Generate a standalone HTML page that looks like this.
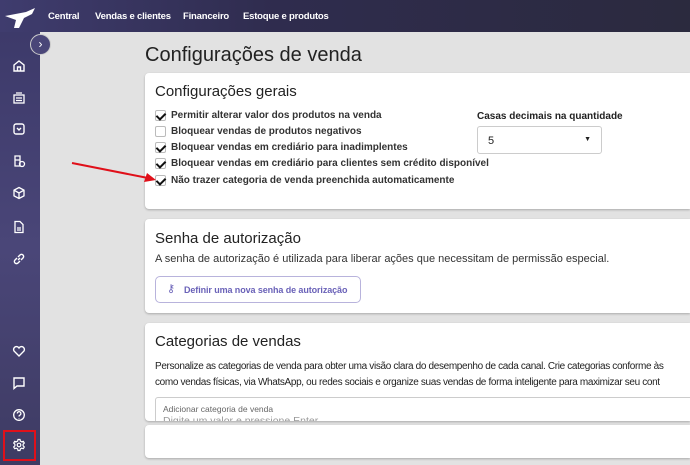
<!DOCTYPE html>
<html><head><meta charset="utf-8"><style>
*{box-sizing:border-box;margin:0;padding:0}
html,body{width:690px;height:465px;overflow:hidden}
body{background:#e2e2e2;font-family:"Liberation Sans",Arial,sans-serif;position:relative}
.top{position:absolute;left:0;top:0;width:690px;height:32px;background:linear-gradient(90deg,#3f3c6e,#2f2c4e 40%,#2b2a3e);}
.top span{position:absolute;top:11px;color:#fff;font-size:9.5px;font-weight:bold;letter-spacing:-0.2px;white-space:nowrap}
.side{position:absolute;left:0;top:32px;width:40px;height:433px;background:linear-gradient(180deg,#3d3a6a,#4a4678 50%,#3e3b63);}
.ico{position:absolute;left:12px;width:14px;height:14px}
.card{position:absolute;left:145px;width:545px;background:#fff;border-radius:4px 0 0 4px;box-shadow:0 1px 2px rgba(0,0,0,.25);overflow:hidden}
.cb{position:absolute;left:10px;font-size:10px;color:#222}
.cb i{position:absolute;left:0;top:0;width:11px;height:11px;border:1px solid #bbb;border-radius:2px;background:#fff}
.cb i.c::after{content:"";position:absolute;left:2px;top:0px;width:4px;height:7px;border:solid #111;border-width:0 2px 2px 0;transform:rotate(45deg)}
.cb b{position:absolute;left:16px;top:0;white-space:nowrap;font-weight:bold;color:#333}
h2{position:absolute;left:10px;font-weight:normal;font-size:15px;color:#222}
</style></head><body>
<div class="top">
<svg style="position:absolute;left:4px;top:8px" width="32" height="22" viewBox="0 0 32 22"><path d="M1 8 L22 4 L31 0 L28 6 L20 10 L15 20 L10 20 L12 12 Z" fill="#fff"/></svg>
<span style="left:48px">Central</span><span style="left:95px">Vendas e clientes</span><span style="left:183px">Financeiro</span><span style="left:243px">Estoque e produtos</span>
</div>
<div class="side">
<svg class="ico" style="top:27px" viewBox="0 0 14 14" fill="none" stroke="#fff" stroke-width="1.4"><path d="M2 6 L7 2 L12 6 V12 H2 Z M5.5 12 V8 H8.5 V12"/></svg>
<svg class="ico" style="top:59px" viewBox="0 0 14 14" fill="none" stroke="#fff" stroke-width="1.3"><rect x="2" y="4" width="10" height="8"/><path d="M4 2h6M4 7h6M4 9.5h6"/></svg>
<svg class="ico" style="top:90px" viewBox="0 0 14 14" fill="none" stroke="#fff" stroke-width="1.4"><rect x="2" y="2" width="10" height="10" rx="2"/><path d="M5 6l2 2 2-2"/></svg>
<svg class="ico" style="top:122px" viewBox="0 0 14 14" fill="none" stroke="#fff" stroke-width="1.3"><path d="M3 2h5v10H3zM3 6h5"/><circle cx="10" cy="10" r="2.5"/></svg>
<svg class="ico" style="top:154px" viewBox="0 0 14 14" fill="none" stroke="#fff" stroke-width="1.3"><path d="M7 1.5l5 2.7v5.6L7 12.5 2 9.8V4.2zM2 4.2l5 2.8 5-2.8M7 7v5.5"/></svg>
<svg class="ico" style="top:188px" viewBox="0 0 14 14" fill="none" stroke="#fff" stroke-width="1.3"><path d="M3 1.5h5l3 3v8H3z M5 8h4M5 10h4"/></svg>
<svg class="ico" style="top:220px" viewBox="0 0 14 14" fill="none" stroke="#fff" stroke-width="1.4"><path d="M6 8l2-2M5 6L3 8a2 2 0 003 3l2-2M9 8l2-2a2 2 0 00-3-3L6 5"/></svg>
<svg class="ico" style="top:312px" viewBox="0 0 14 14" fill="none" stroke="#fff" stroke-width="1.4"><path d="M7 12L2 7a2.6 2.6 0 015-3 2.6 2.6 0 015 3z"/></svg>
<svg class="ico" style="top:344px" viewBox="0 0 14 14" fill="none" stroke="#fff" stroke-width="1.4"><path d="M2 2h10v8H5l-3 2.5z"/></svg>
<svg class="ico" style="top:376px" viewBox="0 0 14 14" fill="none" stroke="#fff" stroke-width="1.3"><circle cx="7" cy="7" r="5.3"/><path d="M5.3 5.5a1.8 1.8 0 113 1.3c-.8.5-1.3.8-1.3 1.7M7 10v.5"/></svg>
<div style="position:absolute;left:3px;top:398px;width:33px;height:31px;border:2px solid #e0101a"></div>
<svg class="ico" style="top:406px" viewBox="0 0 14 14" fill="none" stroke="#fff" stroke-width="1.2"><circle cx="7" cy="7" r="1.8"/><path d="M6 1.5h2l.4 1.6 1.3.7 1.6-.5 1 1.7-1.2 1.2v1.6l1.2 1.2-1 1.7-1.6-.5-1.3.7L8 12.5H6l-.4-1.6-1.3-.7-1.6.5-1-1.7 1.2-1.2V6.2L1.7 5l1-1.7 1.6.5 1.3-.7z"/></svg>
</div>
<div style="position:absolute;left:30px;top:34px;width:21px;height:21px;border-radius:50%;background:#4a4678;border:1px solid #ccc;color:#fff;font-size:12px;text-align:center;line-height:18px">›</div>
<div style="position:absolute;left:145px;top:44px;font-size:20px;color:#222">Configurações de venda</div>

<div class="card" style="top:73px;height:136px">
<h2 style="top:10px">Configurações gerais</h2>
<div class="cb" style="top:37px"><i class="c"></i><b>Permitir alterar valor dos produtos na venda</b></div>
<div class="cb" style="top:53px"><i></i><b>Bloquear vendas de produtos negativos</b></div>
<div class="cb" style="top:69px"><i class="c"></i><b>Bloquear vendas em crediário para inadimplentes</b></div>
<div class="cb" style="top:85px"><i class="c"></i><b>Bloquear vendas em crediário para clientes sem crédito disponível</b></div>
<div class="cb" style="top:102px"><i class="c"></i><b>Não trazer categoria de venda preenchida automaticamente</b></div>
<div style="position:absolute;left:332px;top:38px;font-size:10px;font-weight:bold;color:#222">Casas decimais na quantidade</div>
<div style="position:absolute;left:332px;top:53px;width:125px;height:28px;border:1px solid #ccc;border-radius:3px;font-size:11px;padding:8px 10px;color:#222">5<span style="position:absolute;right:10px;top:9px;font-size:7px">▼</span></div>
</div>
<svg style="position:absolute;left:70px;top:160px" width="90" height="25"><line x1="2" y1="3" x2="78" y2="18" stroke="#e0101a" stroke-width="2"/><path d="M86 20 L74 22 L77 13 Z" fill="#e0101a"/></svg>

<div class="card" style="top:219px;height:94px">
<h2 style="top:11px">Senha de autorização</h2>
<div style="position:absolute;left:10px;top:34px;font-size:11px;color:#333;white-space:nowrap">A senha de autorização é utilizada para liberar ações que necessitam de permissão especial.</div>
<div style="position:absolute;left:10px;top:57px;width:206px;height:27px;border:1px solid #b8b3dc;border-radius:5px;font-size:9px;font-weight:bold;color:#6a62b8;padding:8px 0 0 28px;white-space:nowrap;letter-spacing:-0.1px">Definir uma nova senha de autorização<span style="position:absolute;left:11px;top:5px;font-size:11px;font-weight:normal">⚷</span></div>
</div>

<div class="card" style="top:323px;height:98px">
<h2 style="top:10px">Categorias de vendas</h2>
<div style="position:absolute;left:10px;top:36px;font-size:10px;letter-spacing:-0.35px;line-height:16px;color:#222;white-space:nowrap">Personalize as categorias de venda para obter uma visão clara do desempenho de cada canal. Crie categorias conforme às<br>como vendas físicas, via WhatsApp, ou redes sociais e organize suas vendas de forma inteligente para maximizar seu cont</div>
<div style="position:absolute;left:10px;top:74px;width:560px;height:30px;border:1px solid #ccc;border-radius:3px;overflow:hidden;font-size:8.5px;color:#666;padding:5px 7px;line-height:12px">Adicionar categoria de venda<br><span style="font-size:10.5px;color:#999">Digite um valor e pressione Enter</span></div>
</div>
<div class="card" style="top:425px;height:33px"></div>
</body></html>
